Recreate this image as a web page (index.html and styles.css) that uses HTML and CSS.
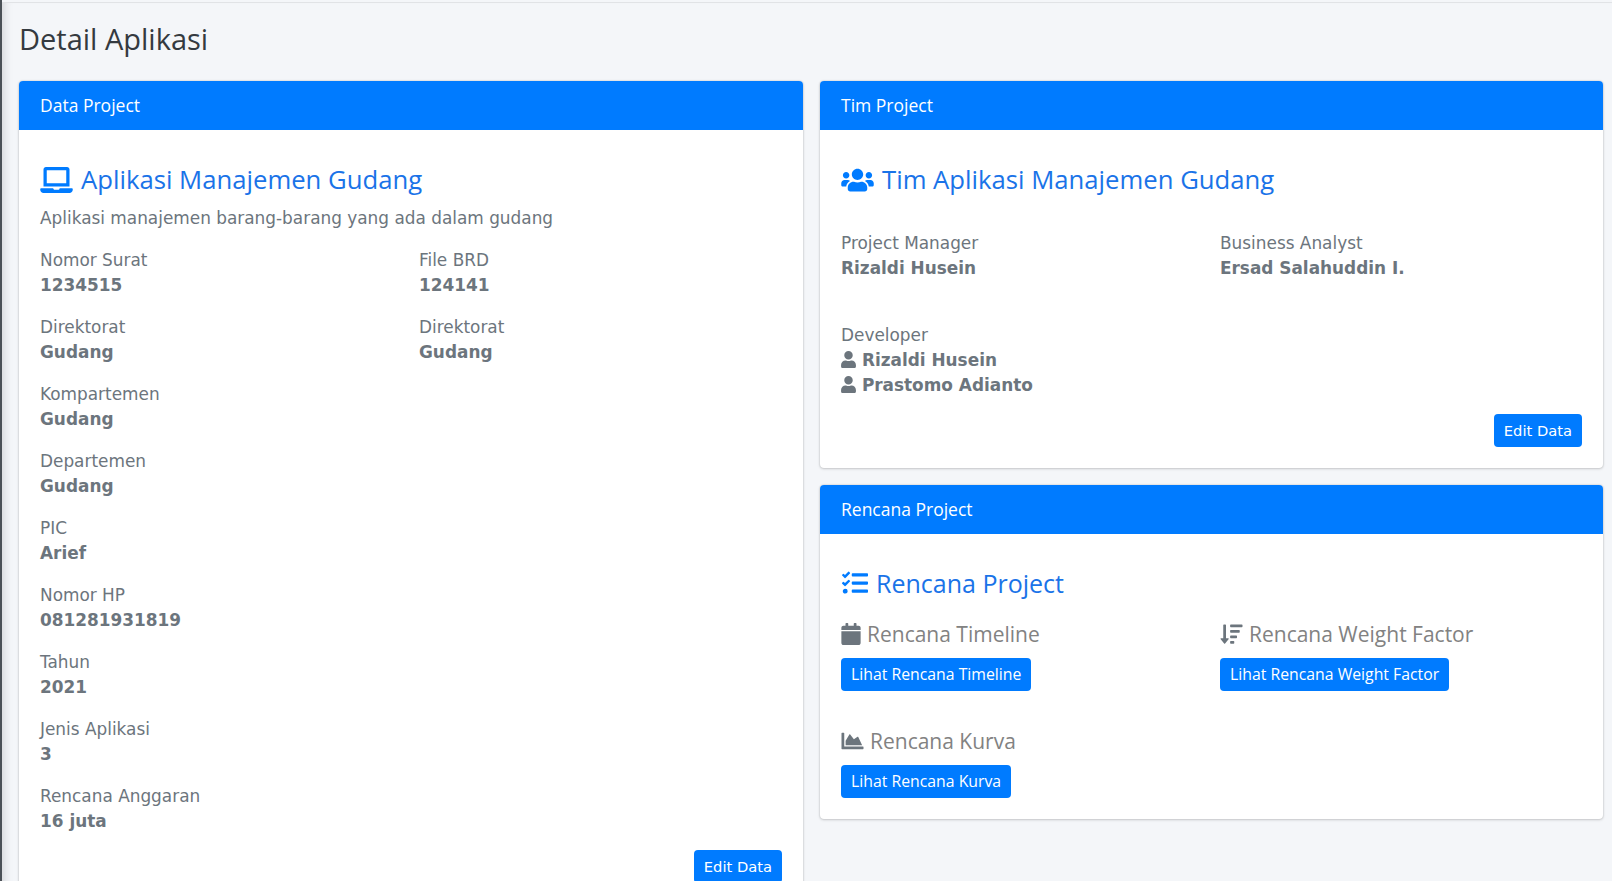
FILE: index.html
```html
<!DOCTYPE html>
<html lang="en">
<head>
  <meta charset="UTF-8">
  <meta name="viewport" content="width=device-width, initial-scale=1.0">
  <title>Detail Aplikasi</title>
  <link rel="stylesheet" href="styles.css">
</head>
<body>
  <main class="page">
    <h1 class="page-title">Detail Aplikasi</h1>

    <div class="columns">
      <div class="card">
        <div class="card-header">Data Project</div>
        <div class="card-body">
          <h3 class="card-title">
            <svg class="title-icon laptop" viewBox="0 0 640 512"><path fill="currentColor" d="M624 416H381.54c-.74 19.81-14.71 32-32.74 32H288c-18.69 0-33.02-17.47-32.77-32H16c-8.8 0-16 7.2-16 16v16c0 35.2 28.8 64 64 64h512c35.2 0 64-28.8 64-64v-16c0-8.8-7.2-16-16-16zM576 48c0-26.4-21.6-48-48-48H112C85.6 0 64 21.6 64 48v336h512V48zm-64 272H128V64h384v256z"/></svg>
            Aplikasi Manajemen Gudang
          </h3>
          <p class="lead-text">Aplikasi manajemen barang-barang yang ada dalam gudang</p>

          <div class="data-grid">
            <div class="field"><span>Nomor Surat</span><b>1234515</b></div>
            <div class="field"><span>File BRD</span><b>124141</b></div>
            <div class="field"><span>Direktorat</span><b>Gudang</b></div>
            <div class="field"><span>Direktorat</span><b>Gudang</b></div>
            <div class="field full"><span>Kompartemen</span><b>Gudang</b></div>
            <div class="field full"><span>Departemen</span><b>Gudang</b></div>
            <div class="field full"><span>PIC</span><b>Arief</b></div>
            <div class="field full"><span>Nomor HP</span><b>081281931819</b></div>
            <div class="field full"><span>Tahun</span><b>2021</b></div>
            <div class="field full"><span>Jenis Aplikasi</span><b>3</b></div>
            <div class="field full"><span>Rencana Anggaran</span><b>16 juta</b></div>
          </div>

          <div class="card-actions">
            <a class="btn" href="#">Edit Data</a>
          </div>
        </div>
      </div>

      <div class="side-column">
        <div class="card">
          <div class="card-header">Tim Project</div>
          <div class="card-body">
            <h3 class="card-title">
              <svg class="title-icon users" viewBox="0 0 640 512"><path fill="currentColor" d="M96 224c35.3 0 64-28.7 64-64s-28.7-64-64-64-64 28.7-64 64 28.7 64 64 64zm448 0c35.3 0 64-28.7 64-64s-28.7-64-64-64-64 28.7-64 64 28.7 64 64 64zm32 32h-64c-17.6 0-33.5 7.1-45.1 18.6 40.3 22.1 68.9 62 75.1 109.4h66c17.7 0 32-14.3 32-32v-32c0-35.3-28.7-64-64-64zm-256 0c61.9 0 112-50.1 112-112S381.900 32 320 32 208 82.100 208 144s50.100 112 112 112zm76.800 32h-8.300c-20.800 10-43.900 16-68.500 16s-47.600-6-68.500-16h-8.300C179.600 288 128 339.600 128 403.200V432c0 26.500 21.500 48 48 48h288c26.500 0 48-21.500 48-48v-28.800c0-63.600-51.600-115.200-115.200-115.200zm-223.700-13.400C161.500 263.100 145.600 256 128 256H64c-35.300 0-64 28.700-64 64v32c0 17.700 14.300 32 32 32h65.900c6.300-47.400 34.900-87.300 75.200-109.400z"/></svg>
              Tim Aplikasi Manajemen Gudang
            </h3>

            <div class="team-grid">
              <div class="field"><span>Project Manager</span><b>Rizaldi Husein</b></div>
              <div class="field"><span>Business Analyst</span><b>Ersad Salahuddin I.</b></div>
              <div class="field full">
                <span>Developer</span>
                <b><svg class="person" viewBox="0 0 448 512"><path fill="currentColor" d="M224 256c70.700 0 128-57.300 128-128S294.700 0 224 0 96 57.300 96 128s57.300 128 128 128zm89.600 32h-16.700c-22.200 10.200-46.900 16-72.900 16s-50.600-5.800-72.900-16h-16.700C60.200 288 0 348.200 0 422.400V464c0 26.500 21.500 48 48 48h352c26.500 0 48-21.500 48-48v-41.600c0-74.200-60.200-134.400-134.400-134.400z"/></svg> Rizaldi Husein</b>
                <b><svg class="person" viewBox="0 0 448 512"><path fill="currentColor" d="M224 256c70.700 0 128-57.300 128-128S294.700 0 224 0 96 57.300 96 128s57.300 128 128 128zm89.600 32h-16.700c-22.200 10.200-46.900 16-72.900 16s-50.600-5.800-72.900-16h-16.700C60.200 288 0 348.200 0 422.400V464c0 26.500 21.500 48 48 48h352c26.500 0 48-21.500 48-48v-41.600c0-74.200-60.200-134.400-134.400-134.400z"/></svg> Prastomo Adianto</b>
              </div>
            </div>

            <div class="card-actions team-actions">
              <a class="btn" href="#">Edit Data</a>
            </div>
          </div>
        </div>

        <div class="card">
          <div class="card-header">Rencana Project</div>
          <div class="card-body plan-body">
            <h3 class="card-title">
              <svg class="title-icon tasks" viewBox="0 0 512 512"><path fill="currentColor" d="M139.610 35.500a12 12 0 0 0-17 0L58.930 98.810l-22.700-22.120a12 12 0 0 0-17 0L3.530 92.410a12 12 0 0 0 0 17l47.590 47.400a12.780 12.780 0 0 0 17.610 0l15.590-15.620L156.520 69a12.090 12.090 0 0 0 .09-17zm0 159.190a12 12 0 0 0-17 0l-63.680 63.720-22.700-22.100a12 12 0 0 0-17 0L3.530 252a12 12 0 0 0 0 17L51 316.500a12.770 12.770 0 0 0 17.600 0l15.700-15.690 72.200-72.220a12 12 0 0 0 .09-16.900zM64 368c-26.490 0-48.590 21.500-48.590 48S37.530 464 64 464a48 48 0 0 0 0-96zm432 16H208a16 16 0 0 0-16 16v32a16 16 0 0 0 16 16h288a16 16 0 0 0 16-16v-32a16 16 0 0 0-16-16zm0-320H208a16 16 0 0 0-16 16v32a16 16 0 0 0 16 16h288a16 16 0 0 0 16-16V80a16 16 0 0 0-16-16zm0 160H208a16 16 0 0 0-16 16v32a16 16 0 0 0 16 16h288a16 16 0 0 0 16-16v-32a16 16 0 0 0-16-16z"/></svg>
              Rencana Project
            </h3>

            <div class="plan-grid">
              <div class="plan-item">
                <h4 class="plan-title">
                  <svg class="plan-icon" viewBox="0 0 448 512"><path fill="currentColor" d="M0 464c0 26.500 21.500 48 48 48h352c26.500 0 48-21.500 48-48V192H0v272zM400 64h-48V16c0-8.800-7.200-16-16-16h-32c-8.800 0-16 7.200-16 16v48H160V16c0-8.800-7.200-16-16-16h-32c-8.800 0-16 7.200-16 16v48H48C21.500 64 0 85.500 0 112v48h448v-48c0-26.500-21.500-48-48-48z"/></svg>
                  Rencana Timeline
                </h4>
                <a class="btn" href="#">Lihat Rencana Timeline</a>
              </div>
              <div class="plan-item">
                <h4 class="plan-title">
                  <svg class="plan-icon sort" viewBox="0 0 512 512"><path fill="currentColor" d="M304 416h-64a16 16 0 0 0-16 16v32a16 16 0 0 0 16 16h64a16 16 0 0 0 16-16v-32a16 16 0 0 0-16-16zm-128-64h-48V48a16 16 0 0 0-16-16H80a16 16 0 0 0-16 16v304H16c-14.190 0-21.370 17.240-11.290 27.310l80 96a16 16 0 0 0 22.620 0l80-96C197.350 369.260 190.220 352 176 352zm256-192H240a16 16 0 0 0-16 16v32a16 16 0 0 0 16 16h192a16 16 0 0 0 16-16v-32a16 16 0 0 0-16-16zm-64 128H240a16 16 0 0 0-16 16v32a16 16 0 0 0 16 16h128a16 16 0 0 0 16-16v-32a16 16 0 0 0-16-16zM496 32H240a16 16 0 0 0-16 16v32a16 16 0 0 0 16 16h256a16 16 0 0 0 16-16V48a16 16 0 0 0-16-16z"/></svg>
                  Rencana Weight Factor
                </h4>
                <a class="btn" href="#">Lihat Rencana Weight Factor</a>
              </div>
              <div class="plan-item">
                <h4 class="plan-title">
                  <svg class="plan-icon chart" viewBox="0 0 512 512"><path fill="currentColor" d="M500 384c6.600 0 12 5.400 12 12v40c0 6.600-5.400 12-12 12H12c-6.600 0-12-5.400-12-12V76c0-6.600 5.400-12 12-12h40c6.600 0 12 5.400 12 12v308h436zM372.700 159.500L288 216l-85.300-113.700c-5.100-6.800-15.500-6.300-19.900 1L96 248v104h384l-89.900-187.800c-3.200-6.500-11.400-8.700-17.400-4.700z"/></svg>
                  Rencana Kurva
                </h4>
                <a class="btn" href="#">Lihat Rencana Kurva</a>
              </div>
            </div>
          </div>
        </div>
      </div>
    </div>
  </main>
</body>
</html>
```

FILE: styles.css
```css
body {
  margin: 0;
  box-sizing: border-box;
  height: 881px;
  padding-top: 2px;
  overflow: hidden;
  font-family: "DejaVu Sans", sans-serif;
  font-size: 16.9px;
  line-height: 25px;
  color: #6c757d;
  background-color: #f4f6f9;
  border-left: 2px solid #4b5157;
}

.page {
  min-height: 878px;
  padding: 0 9px 0 17px;
  border-top: 1px solid #e1e3e6;
  box-shadow: inset 10px 0 10px -8px rgba(0, 0, 0, 0.14);
}

.page-title {
  margin: 0;
  padding: 14px 0 21px;
  font-family: "Open Sans", sans-serif;
  font-size: 29px;
  font-weight: 400;
  line-height: 43px;
  color: #343a40;
}

.columns {
  display: grid;
  grid-template-columns: 784px 783px;
  gap: 17px;
  align-items: start;
}

.side-column {
  display: flex;
  flex-direction: column;
  gap: 17px;
}

.card {
  background-color: #fff;
  border-radius: 4px;
  box-shadow: 0 0 2px rgba(0, 0, 0, 0.2), 0 1px 3px rgba(0, 0, 0, 0.15);
}

.card-header {
  height: 49px;
  padding: 0 21px;
  font-family: "Open Sans", sans-serif;
  font-size: 17.5px;
  line-height: 48px;
  color: #fff;
  background-color: #007bff;
  border-radius: 4px 4px 0 0;
}

.card-body {
  padding: 30px 21px 21px;
}

.card-title {
  display: flex;
  align-items: center;
  gap: 8px;
  margin: 0;
  font-family: "Open Sans", sans-serif;
  font-size: 25.7px;
  font-weight: 400;
  line-height: 40px;
  color: #1a73e8;
}

.title-icon {
  height: 26px;
  color: #007bff;
}

.title-icon.laptop {
  width: 33px;
}

.title-icon.users {
  width: 33px;
}

.title-icon.tasks {
  width: 28px;
}

.lead-text {
  margin: 6px 0 0;
}

.data-grid,
.team-grid,
.plan-grid {
  display: grid;
  grid-template-columns: 379px 1fr;
}

.data-grid {
  margin-top: 17px;
  row-gap: 17px;
}

.team-grid {
  margin-top: 31px;
  row-gap: 42px;
}

.field span,
.field b {
  display: block;
}

.field.full,
.plan-item:last-child {
  grid-column: 1 / -1;
}

.person {
  width: 15px;
  height: 17px;
  vertical-align: -2px;
}

.card-actions {
  display: flex;
  justify-content: flex-end;
  margin-top: 16px;
}

.team-actions {
  margin-top: 16px;
}

.btn {
  display: inline-block;
  padding: 4px 10px;
  font-size: 14.7px;
  line-height: 25px;
  color: #fff;
  text-decoration: none;
  background-color: #007bff;
  border-radius: 4px;
}

.plan-body {
  padding-top: 29px;
}

.plan-body .card-title {
  gap: 7px;
  font-size: 25px;
}

.plan-grid {
  margin-top: 15px;
  row-gap: 34px;
}

.plan-title {
  display: flex;
  align-items: center;
  gap: 6px;
  margin: 0 0 8px;
  font-family: "Open Sans", sans-serif;
  font-size: 21px;
  font-weight: 400;
  line-height: 32px;
  color: #828282;
}

.plan-icon {
  width: 20px;
  height: 22px;
  color: #6c757d;
}

.plan-icon.sort {
  width: 23px;
}

.plan-icon.chart {
  width: 23px;
}

.plan-item .btn {
  font-family: "Open Sans", sans-serif;
  font-size: 15.8px;
}
```
